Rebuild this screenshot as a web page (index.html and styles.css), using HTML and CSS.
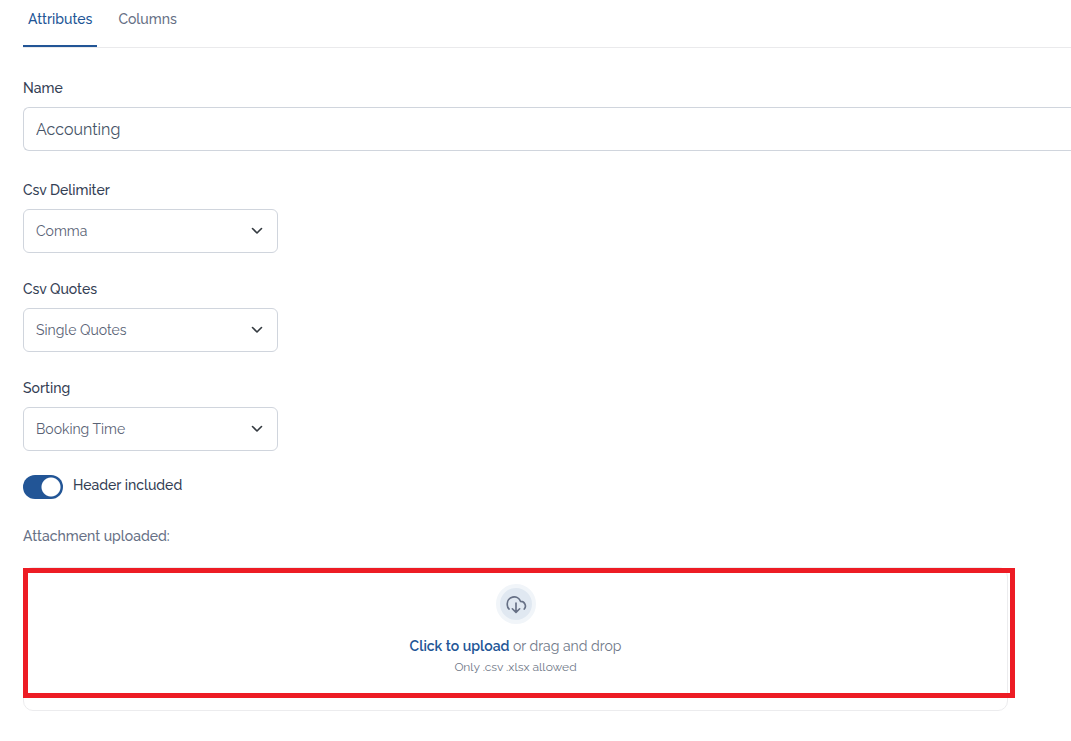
FILE: index.html
```html
<!DOCTYPE html>
<html lang="en">
<head>
  <meta charset="utf-8">
  <title>Accounting</title>
  <link rel="stylesheet" href="styles.css">
</head>
<body>
  <nav class="tabs">
    <a class="tab active" href="#attributes">Attributes</a>
    <a class="tab" href="#columns">Columns</a>
  </nav>
  <form class="form" id="attributes">
    <div class="field field-name">
      <label class="label" for="name">Name</label>
      <input type="text" class="input" id="name" value="Accounting">
    </div>
    <div class="field">
      <label class="label" for="delimiter">Csv Delimiter</label>
      <div class="select-wrap">
        <select class="select" id="delimiter">
          <option selected>Comma</option>
        </select>
        <svg class="chevron" viewBox="0 0 12 8"><path d="M1.500 1.500 6 6l4.500-4.500"/></svg>
      </div>
    </div>
    <div class="field">
      <label class="label" for="quotes">Csv Quotes</label>
      <div class="select-wrap">
        <select class="select" id="quotes">
          <option selected>Single Quotes</option>
        </select>
        <svg class="chevron" viewBox="0 0 12 8"><path d="M1.500 1.500 6 6l4.500-4.500"/></svg>
      </div>
    </div>
    <div class="field">
      <label class="label" for="sorting">Sorting</label>
      <div class="select-wrap">
        <select class="select" id="sorting">
          <option selected>Booking Time</option>
        </select>
        <svg class="chevron" viewBox="0 0 12 8"><path d="M1.500 1.500 6 6l4.500-4.500"/></svg>
      </div>
    </div>
    <div class="switch-row">
      <input type="checkbox" class="switch" id="header-included" checked>
      <label class="label" for="header-included">Header included</label>
    </div>
    <p class="attachment">Attachment uploaded:</p>
    <div class="upload">
      <div class="upload-icon">
        <svg viewBox="0 0 24 24">
          <path d="M4.500 17.500a6 6 0 0 1-2-5A7.500 7.500 0 0 1 17 9.200a5 5 0 0 1 4 8.300"/>
          <path d="M12 11v10M8 17.200l4 4 4-4"/>
        </svg>
      </div>
      <div class="upload-text"><button type="button" class="upload-button">Click to upload</button> or drag and drop</div>
      <div class="upload-hint">Only .csv .xlsx allowed</div>
      <div class="highlight"></div>
    </div>
  </form>
</body>
</html>
```

FILE: styles.css
```css
body {
  font-family: Raleway, Lato, sans-serif;
  font-size: 14px;
  line-height: 20px;
  margin: 0;
  padding-left: 23px;
  color: #344054;
  background-color: #fff;
  overflow-x: hidden;
}
.tabs {
  display: flex;
  gap: 16px;
  border-bottom: 1px solid #eaeaec;
}
.tab {
  font-weight: 500;
  padding: 9px 5px 16px;
  border-bottom: 2px solid transparent;
  color: #667085;
  text-decoration: none;
}
.tab.active {
  color: #225596;
  border-bottom-color: #225596;
}
.form {
  padding-top: 30px;
}
.field {
  display: flex;
  flex-direction: column;
  gap: 9px;
  margin-bottom: 26px;
}
.field-name {
  margin-bottom: 29px;
}
.label {
  font-weight: 500;
}
.input, .select {
  font-family: inherit;
  width: 100%;
  height: 44px;
  padding: 0 12px;
  border: 1px solid #d0d5dd;
  border-radius: 6px;
  box-sizing: border-box;
  background-color: #fff;
}
.input {
  font-size: 16px;
  color: #475467;
  border-right: 0;
  border-radius: 6px 0 0 6px;
}
.select {
  appearance: none;
  font-size: 14px;
  color: #596275;
}
.select-wrap {
  position: relative;
  width: 255px;
}
.chevron {
  position: absolute;
  top: 18px;
  right: 15px;
  width: 12px;
  height: 8px;
  fill: none;
  stroke: #343a40;
  stroke-width: 1.6;
  stroke-linecap: round;
  stroke-linejoin: round;
  pointer-events: none;
}
.switch-row {
  display: flex;
  gap: 10px;
  margin-top: -2px;
}
.switch {
  appearance: none;
  width: 40px;
  height: 24px;
  margin: 0;
  border-radius: 12px;
  background: radial-gradient(circle at 28px 12px, #fff 9px, #225596 10px);
}
.attachment {
  font-weight: 500;
  margin: 27px 0 21px;
  color: #667085;
}
.upload {
  position: relative;
  display: flex;
  flex-direction: column;
  align-items: center;
  margin-right: 63px;
  padding: 16px 16px 32px;
  border: 1px solid #ececee;
  border-radius: 10px;
  color: #6f7888;
}
.upload-icon {
  display: flex;
  align-items: center;
  justify-content: center;
  width: 32px;
  height: 32px;
  margin-bottom: 12px;
  border: 4px solid #f1f5f9;
  border-radius: 50%;
  background-color: #e0e8f1;
}
.upload-icon svg {
  width: 22px;
  height: 22px;
  fill: none;
  stroke: #667085;
  stroke-width: 1.8;
  stroke-linecap: round;
  stroke-linejoin: round;
}
.upload-button {
  font: inherit;
  font-weight: 600;
  padding: 0;
  border: 0;
  background: none;
  color: #225596;
  cursor: pointer;
}
.upload-hint {
  font-size: 12px;
  line-height: 22px;
}
.highlight {
  position: absolute;
  top: 0;
  right: -8px;
  bottom: 12px;
  left: -1px;
  border: 5px solid #ed1c24;
  pointer-events: none;
}
```
